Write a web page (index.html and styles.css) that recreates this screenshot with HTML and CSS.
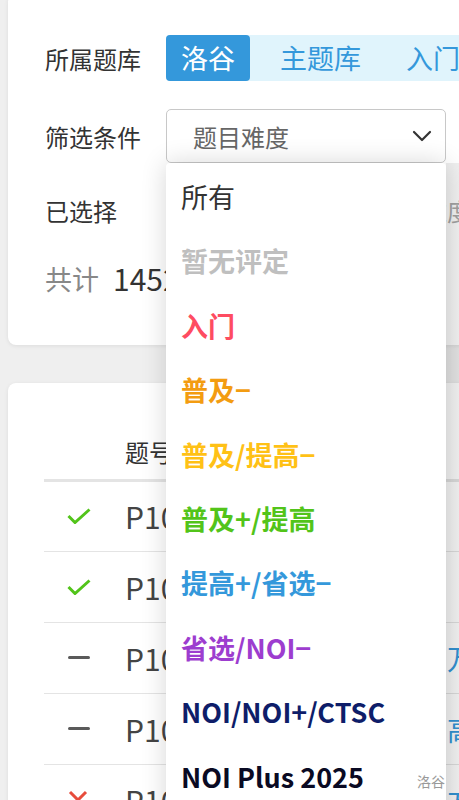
FILE: index.html
```html
<!DOCTYPE html>
<html lang="zh-CN">
<head>
    <meta charset="UTF-8">
    <meta name="viewport" content="width=device-width, initial-scale=1.0">
    <title>题目列表 - 洛谷</title>
    <link rel="stylesheet" href="styles.css">
</head>
<body>
    <div class="page">
        <section class="card filter-card">
            <div class="filter-row">
                <span class="filter-label">所属题库</span>
                <div class="tabs">
                    <span class="tab active">洛谷</span>
                    <span class="tab">主题库</span>
                    <span class="tab">入门</span>
                    <span class="tab">面试</span>
                </div>
            </div>

            <div class="filter-row select-row">
                <span class="filter-label">筛选条件</span>
                <div class="select">
                    <div class="select-box">
                        <span class="select-value">题目难度</span>
                        <svg class="chevron" width="20" height="12" viewBox="0 0 20 12">
                            <polyline points="2,2 10,10 18,2" fill="none" stroke="#333" stroke-width="2.2" stroke-linecap="round" stroke-linejoin="round"/>
                        </svg>
                    </div>
                    <ul class="select-menu">
                        <li class="opt opt-all">所有</li>
                        <li class="opt" style="color: #bfbfbf">暂无评定</li>
                        <li class="opt" style="color: #fe4c61">入门</li>
                        <li class="opt" style="color: #f39c11">普及−</li>
                        <li class="opt" style="color: #ffc116">普及/提高−</li>
                        <li class="opt" style="color: #52c41a">普及+/提高</li>
                        <li class="opt" style="color: #3498db">提高+/省选−</li>
                        <li class="opt" style="color: #9d3dcf">省选/NOI−</li>
                        <li class="opt" style="color: #0e1d69">NOI/NOI+/CTSC</li>
                        <li class="opt" style="color: #0a0a23">NOI Plus 2025</li>
                    </ul>
                    <span class="watermark">洛谷</span>
                </div>
            </div>

            <div class="filter-row">
                <span class="filter-label">已选择</span>
                <div class="chosen">
                    <span class="chosen-tag">洛谷</span>
                    <span class="chosen-tag">主题库</span>
                    <span class="chosen-tag muted">题目难度</span>
                </div>
            </div>

            <div class="filter-row count-row">
                <span class="count-label">共计</span>
                <span class="count">14523</span>
                <span class="count-label">条结果</span>
            </div>
        </section>

        <section class="card list-card">
            <table class="problems">
                <thead>
                    <tr>
                        <th class="col-status"></th>
                        <th class="col-pid">题号</th>
                        <th class="col-title">题目名称</th>
                    </tr>
                </thead>
                <tbody>
                    <tr>
                        <td class="col-status">
                            <svg width="24" height="16" viewBox="0 0 24 16"><polyline points="1.5,8 8,14.5 22.5,1.5" fill="none" stroke="#52c41a" stroke-width="3"/></svg>
                        </td>
                        <td class="col-pid">P1000</td>
                        <td class="col-title"></td>
                    </tr>
                    <tr>
                        <td class="col-status">
                            <svg width="24" height="16" viewBox="0 0 24 16"><polyline points="1.5,8 8,14.5 22.5,1.5" fill="none" stroke="#52c41a" stroke-width="3"/></svg>
                        </td>
                        <td class="col-pid">P1001</td>
                        <td class="col-title"></td>
                    </tr>
                    <tr>
                        <td class="col-status"><span class="dash"></span></td>
                        <td class="col-pid">P1002</td>
                        <td class="col-title">万能的过河卒</td>
                    </tr>
                    <tr>
                        <td class="col-status"><span class="dash"></span></td>
                        <td class="col-pid">P1003</td>
                        <td class="col-title">高精度铺地毯</td>
                    </tr>
                    <tr>
                        <td class="col-status">
                            <svg width="22" height="22" viewBox="0 0 22 22"><path d="M3 3 L19 19 M19 3 L3 19" stroke="#e74c3c" stroke-width="3"/></svg>
                        </td>
                        <td class="col-pid">P1004</td>
                        <td class="col-title">方格取数</td>
                    </tr>
                </tbody>
            </table>
        </section>
    </div>
</body>
</html>
```

FILE: styles.css
```css
* {
    box-sizing: border-box;
    margin: 0;
    padding: 0;
}

body {
    font-family: "Noto Sans CJK SC", "Noto Sans", sans-serif;
    background: #efefef;
    color: #333;
    overflow: hidden;
    height: 800px;
}

.page {
    width: 680px;
    padding: 0 8px;
}

.card {
    background: #fff;
    border-radius: 8px;
    box-shadow: 0 1px 4px rgba(0, 0, 0, 0.08);
}

/* filter card */

.filter-card {
    margin-top: -6px;
    padding: 41px 37px 44px;
}

.filter-row {
    display: flex;
    align-items: center;
    height: 46px;
    margin-bottom: 22px;
}

.filter-row:first-child {
    margin-bottom: 28px;
}

.select-row {
    height: 54px;
    margin-bottom: 24px;
}

.count-row {
    margin-bottom: 0;
}

.filter-label {
    width: 121px;
    flex-shrink: 0;
    font-size: 24px;
    color: #333;
}

.tabs {
    display: flex;
    gap: 15px;
    height: 46px;
    flex: 1;
    background: #e0f4fc;
    border-radius: 4px 0 0 4px;
}

.tab {
    padding: 0 15px;
    font-size: 27px;
    line-height: 46px;
    color: #3498db;
    white-space: nowrap;
}

.tab.active {
    background: #3498db;
    color: #fff;
    border-radius: 4px;
}

.select {
    position: relative;
    width: 280px;
    height: 54px;
}

.select-box {
    display: flex;
    align-items: center;
    justify-content: space-between;
    height: 54px;
    padding: 0 13px 0 26px;
    border: 1px solid #c8c8c8;
    border-radius: 5px;
}

.select-value {
    font-size: 24px;
    color: #666;
}

.select-menu {
    position: absolute;
    top: 54px;
    left: 0;
    z-index: 10;
    width: 280px;
    height: 720px;
    padding-top: 2px;
    list-style: none;
    background: #fff;
    border-radius: 4px;
    box-shadow: 0 0 26px rgba(0, 0, 0, 0.16);
}

/* grey track along the right side of the open menu */
.select-menu::after {
    content: '';
    position: absolute;
    top: 0;
    left: 280px;
    width: 20px;
    height: 100%;
    background: linear-gradient(to right, rgba(0, 0, 0, 0.075), rgba(0, 0, 0, 0.055));
}

.opt {
    padding-left: 15px;
    font-size: 27px;
    font-weight: 700;
    line-height: 64.4px;
    white-space: nowrap;
}

.opt-all {
    font-weight: 400;
    color: #333;
}

.watermark {
    position: absolute;
    top: 662px;
    right: 1px;
    z-index: 11;
    font-size: 14px;
    color: #999;
}

.chosen {
    display: flex;
    gap: 12px;
    white-space: nowrap;
}

.chosen-tag {
    padding: 0 13px;
    font-size: 24px;
    color: #3498db;
}

.chosen-tag.muted {
    color: #aaa;
}

.count-label {
    font-size: 27px;
    color: #888;
}

.count {
    margin: 0 14px;
    font-size: 30px;
    color: #333;
}

/* problem list */

.list-card {
    margin-top: 38px;
    padding: 38px 0 20px 36px;
}

.problems {
    border-collapse: collapse;
    width: 620px;
}

.problems th {
    height: 59px;
    padding-top: 3px;
    font-size: 24px;
    font-weight: 400;
    text-align: left;
    color: #333;
    border-bottom: 3px solid #e4e4e4;
}

.problems td {
    height: 71px;
    border-bottom: 1px solid #e4e4e4;
}

.col-status {
    width: 81px;
    padding-left: 23px;
}

.col-status svg {
    display: block;
}

.col-pid {
    width: 322px;
    font-size: 30px;
    color: #444;
}

.col-title {
    font-size: 28px;
    color: #3498db;
    white-space: nowrap;
}

.problems th.col-title {
    color: #333;
    padding-left: 60px;
}

.dash {
    display: block;
    width: 22px;
    height: 3px;
    margin-left: 1px;
    background: #5a5a5a;
    border-radius: 2px;
}
```
